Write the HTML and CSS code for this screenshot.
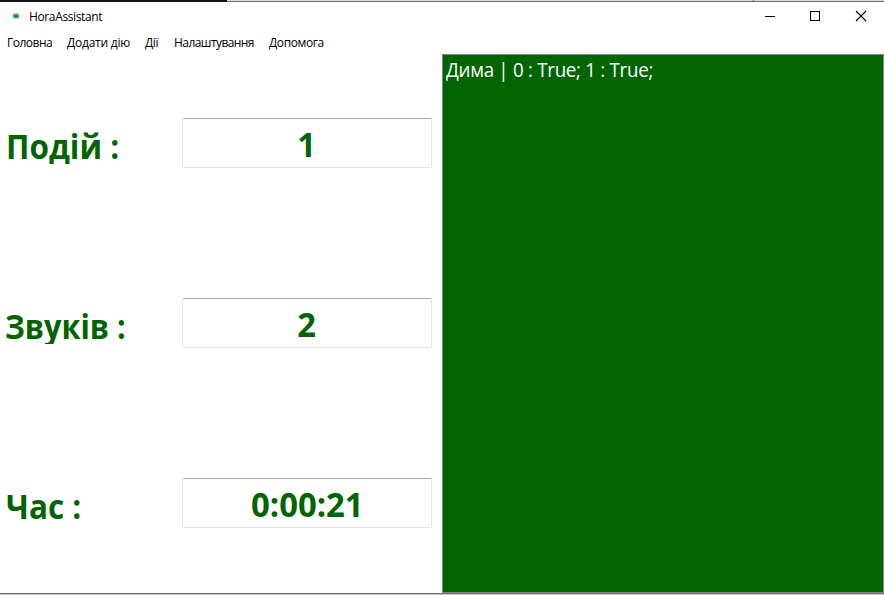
FILE: index.html
```html
<!DOCTYPE html>
<html lang="uk">
<head>
<meta charset="utf-8">
<title>HoraAssistant</title>
<link rel="stylesheet" href="styles.css">
</head>
<body>
<div class="window">
  <div class="top-edge"><span class="edge-dark"></span><span class="edge-light"></span><span class="edge-light-end"></span></div>
  <header class="titlebar">
    <svg class="app-icon" width="8" height="6" viewBox="0 0 8 6"><path d="M1 1 6 .5 7 2v3L2 5.500.8 3.500z" fill="#35a93c" stroke="#a8dba8" stroke-width=".7"/><path d="M3 2.500h3v1.500H3z" fill="#16801e"/></svg>
    <span class="title">HoraAssistant</span>
    <div class="controls">
      <svg width="46" height="28" viewBox="0 0 46 28" shape-rendering="crispEdges"><path d="M19 14.500h10" stroke="#000"/></svg>
      <svg width="46" height="28" viewBox="0 0 46 28" shape-rendering="crispEdges"><path d="M18.500 9.500h9v9h-9z" fill="none" stroke="#000"/></svg>
      <svg width="46" height="28" viewBox="0 0 46 28"><path d="M18 9l10 10M28 9 18 19" fill="none" stroke="#000" stroke-width="1.100"/></svg>
    </div>
  </header>
  <nav class="menu">
    <span class="m1">Головна</span><span class="m2">Додати дію</span><span class="m3">Дії</span><span class="m4">Налаштування</span><span class="m5">Допомога</span>
  </nav>
  <main class="content">
    <section class="stats">
      <div class="row"><div class="label"><span class="l1">Подій :</span></div><div class="field"><span>1</span></div></div>
      <div class="row"><div class="label"><span class="l2">Звуків :</span></div><div class="field"><span>2</span></div></div>
      <div class="row"><div class="label"><span class="l3">Час :</span></div><div class="field"><span>0:00:21</span></div></div>
    </section>
    <section class="list"><span class="item">Дима | 0 : True; 1 : True;</span></section>
  </main>
  <div class="bottom-edge"></div>
</div>
</body>
</html>
```
FILE: styles.css
```css
* { box-sizing: border-box; }
body {
  margin: 0;
  background: #fff;
  font-family: "Open Sans", "Noto Sans", sans-serif;
  color: #000;
}
.window { width: 884px; height: 598px; display: flex; flex-direction: column; }
.top-edge { height: 2px; display: flex; flex: none; border-bottom: 1px solid #707070; }
.edge-dark { width: 227px; height: 2px; background: #14121c; }
.edge-light { width: 526px; background: #d8d8d8; }
.edge-light-end { flex: 1; background: #d8d8d8; border-left: 1px solid #777; }
.titlebar { height: 28px; flex: none; display: flex; align-items: center; padding-left: 12px; }
.title { margin-left: 9px; padding-top: 1px; font-size: 12px; line-height: 16px; letter-spacing: -0.37px; white-space: nowrap; }
.controls { margin-left: auto; display: flex; }
.controls svg { display: block; }
.menu {
  height: 24px;
  flex: none;
  display: flex;
  padding: 5px 0 0 7px;
  font-size: 12px;
  line-height: 16px;
  letter-spacing: -0.4px;
  white-space: nowrap;
}
.m1 { width: 60px; letter-spacing: -0.5px; }
.m2 { width: 78px; letter-spacing: -0.22px; }
.m3 { width: 29px; }
.m4 { width: 95px; letter-spacing: -0.57px; }
.content { height: 539px; flex: none; display: flex; }
.stats { width: 442px; padding-top: 64px; }
.row { height: 180px; display: flex; }
.row:last-child { height: 115px; }
.label {
  width: 182px;
  height: 46px;
  padding: 4px 0 0 6px;
  overflow: hidden;
  font-size: 34px;
  font-weight: 700;
  line-height: 48px;
  color: #006400;
  white-space: nowrap;
}
.label span { display: inline-block; transform-origin: left; }
.l1 { transform: scaleX(0.925); }
.l2 { margin-left: -1px; transform: scaleX(0.9); }
.l3 { transform: scaleX(0.925); }
.field {
  width: 250px;
  height: 50px;
  border: 1px solid #e3e5eb;
  border-top-color: #abadb3;
  border-radius: 2px;
  font-size: 34px;
  font-weight: 700;
  line-height: 50px;
  text-align: center;
  color: #006400;
}
.field span { display: inline-block; transform: scaleX(0.965); }
.list { width: 442px; background: #006400; border: 1px solid #828790; padding: 2px 3px; }
.item {
  display: block;
  color: #fff;
  font-size: 19.5px;
  line-height: 26px;
  letter-spacing: -0.3px;
  white-space: nowrap;
  transform: scaleX(0.962);
  transform-origin: left;
}
.bottom-edge { height: 2px; flex: none; background: #c4c4c4; border-top: 1px solid #707070; }
```
